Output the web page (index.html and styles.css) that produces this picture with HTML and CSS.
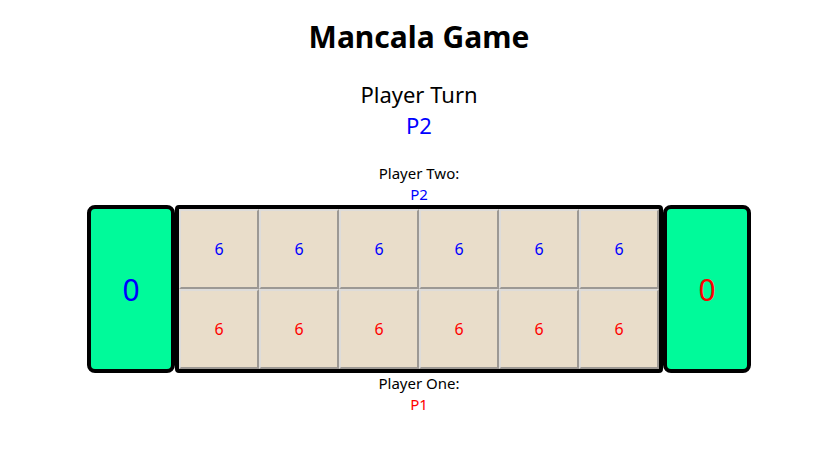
FILE: index.html
```html
<!DOCTYPE html>
<html>
<head>
<meta charset="utf-8">
<title>Mancala Game</title>
<link rel="stylesheet" href="styles.css">
</head>
<body>
<div class="page">
  <h1 class="title">Mancala Game</h1>
  <div class="turn-label">Player Turn</div>
  <div class="turn-player p2">P2</div>
  <div class="player-label top">Player Two:</div>
  <div class="player-name p2">P2</div>
  <div class="board">
    <div class="store p2">0</div>
    <div class="pits">
      <div class="pit p2">6</div>
      <div class="pit p2">6</div>
      <div class="pit p2">6</div>
      <div class="pit p2">6</div>
      <div class="pit p2">6</div>
      <div class="pit p2">6</div>
      <div class="pit p1">6</div>
      <div class="pit p1">6</div>
      <div class="pit p1">6</div>
      <div class="pit p1">6</div>
      <div class="pit p1">6</div>
      <div class="pit p1">6</div>
    </div>
    <div class="store p1">0</div>
  </div>
  <div class="player-label">Player One:</div>
  <div class="player-name p1">P1</div>
</div>
</body>
</html>
```
FILE: styles.css
```css
html, body {
  margin: 0;
  padding: 0;
  background: #ffffff;
}
.page {
  padding-left: 16px;
  text-align: center;
  font-family: "Noto Sans", "Open Sans", sans-serif;
  color: #000000;
}
.title {
  margin: 17px 0 0;
  font-size: 30px;
  font-weight: 700;
  line-height: 40px;
}
.turn-label {
  margin-top: 22px;
  font-size: 22px;
  line-height: 31px;
}
.turn-player {
  font-size: 22px;
  line-height: 31px;
}
.player-label {
  font-size: 15px;
  line-height: 21px;
}
.player-label.top {
  margin-top: 22px;
}
.player-name {
  font-size: 15px;
  line-height: 21px;
}
.p1 { color: #ff0000; }
.p2 { color: #0000ff; }
.board {
  display: flex;
  justify-content: center;
}
.store {
  width: 80px;
  height: 160px;
  border: 4px solid #000000;
  border-radius: 8px;
  background: #00fa9a;
  display: flex;
  align-items: center;
  justify-content: center;
  font-size: 30px;
}
.pits {
  display: grid;
  grid-template-columns: repeat(6, 80px);
  grid-template-rows: repeat(2, 80px);
  border: 4px solid #000000;
  border-radius: 4px;
  background: #e9dcca;
}
.pit {
  box-sizing: border-box;
  border: 2px solid;
  border-color: #dedcda #9c9894 #9c9894 #dedcda;
  background: #e9ddca;
  display: flex;
  align-items: center;
  justify-content: center;
  font-size: 16px;
}
```
